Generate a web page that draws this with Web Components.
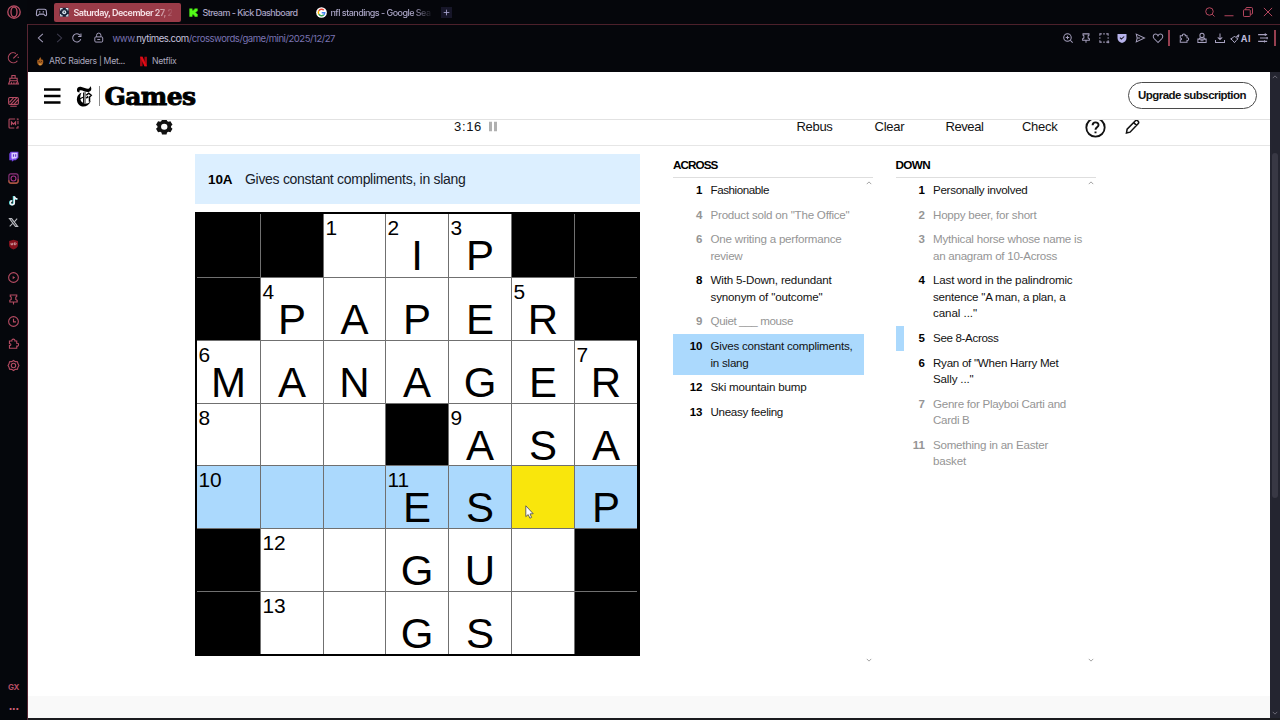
<!DOCTYPE html>
<html lang="en">
<head>
<meta charset="UTF-8">
<title>The Mini Crossword</title>
<style>
    body {
        margin: 0;
        width: 1280px;
        height: 720px;
        overflow: hidden;
        background: #05060b;
        font-family: 'Liberation Sans', Arial, sans-serif;
    }
</style>
</head>
<body>
<mini-app></mini-app>

<script>
const ICONS = {
    opera: '<circle cx="8" cy="8" r="6.2"/><ellipse cx="8" cy="8" rx="3" ry="5"/>',
    gamepad: '<path d="M4.2 4h7.6c1.3 0 2 .8 2.1 2l.4 4.2c.1 2-1.7 2.3-2.5.9L10.7 10H5.3l-1.1 1.1c-.8 1.4-2.6 1.1-2.5-.9L2.1 6c.1-1.2.8-2 2.1-2z"/><path d="M5 7.2h1.6M9.5 7.2h1.6"/>',
    speed: '<path d="M12.8 12A6.2 6.2 0 1 1 11 3M7.8 9l5.4-5.2M13.8 7v1.5"/>',
    clean: '<path d="M6 6.5V3h4v3.5M3.5 6.5h9v3h-9zM3.5 9.5L2 13.5h12l-1.500-4M5.500 13.500v-2M8.500 13.500v-2M11.500 13.500v-2"/>',
    limiter: '<rect x="2" y="3" width="12" height="8.500" rx="1.500"/><path d="M3 9l5-5.500M5 11l7-7.500M9 11l4.500-5M4 13.800h8"/>',
    mods: '<path d="M10 2.500H3.500a1 1 0 0 0-1 1v9a1 1 0 0 0 1 1H9M13.500 5v4M13.500 11v2.500H11M12 2.500h1.500V4"/><path d="M5.500 10.300V6.200L8 8.800l2.500-2.600v4.100" stroke-width="1.500"/>',
    twitch: '<path d="M4.500 2H14v7.500L10.800 12.500H8.500L6 14.500v-2H2.800V4.500z" fill="#7443e6" stroke="none"/><path d="M5.500 3.300h7.300v5.400l-2 1.900H8.300L6.600 12v-1.500H5.500z" fill="#dccdff" stroke="none"/><path d="M8 5.300v3M10.700 5.300v3" stroke="#6033ca" stroke-width="1.400"/>',
    instagram: '<rect x="2.300" y="2.300" width="11.400" height="11.400" rx="2.500" stroke="#8f347e"/><path d="M2.300 10v1.500a2.200 2.200 0 0 0 2.200 2.200h7a2.200 2.200 0 0 0 2.200-2.200V9" stroke="#b8622f"/><circle cx="8" cy="8" r="3" stroke="#a9338b"/><path d="M11.400 4.500h.1" stroke="#a850c8"/>',
    tiktok: '<path d="M8.200 2.500v8.300a2.300 2.300 0 1 1-2.300-2.300M8.200 3c.5 2 2 3.200 4.300 3.300" stroke="#36d5d4" stroke-width="2.200"/><path d="M9 2.800v8a2.400 2.400 0 1 1-2.400-2.400M9 3c.5 2 1.900 3 3.900 3.200" stroke="#f4eef4" stroke-width="1.900"/>',
    x: '<path d="M3 3.200h2.700l7.400 9.600h-2.700z" stroke="#b9bac0"/><path d="M12.500 3.200L9 7.200M7 9l-3.700 3.900" stroke="#b9bac0" stroke-width="1.300"/>',
    ublock: '<path d="M8 2l5.500 1.700v4.500c0 3-2.500 4.800-5.500 6-3-1.200-5.500-3-5.500-6V3.700z" fill="#86111d" stroke="none"/><path d="M5 6v2.300h2V6M9 6v2.300h1.500l.7-.7v-.9l-.7-.7z" stroke="#e4c9cc" stroke-width=".9"/>',
    player: '<circle cx="8" cy="8" r="6"/><path d="M7 6l3 2-3 2z" fill="currentColor" stroke="none"/>',
    pin: '<path d="M4 2.500h8v1.700L10.800 5v3L12.500 9v2h-9V9l1.700-1V5L4 4.200zM8 11v3.300"/>',
    clock: '<circle cx="8" cy="8" r="6"/><path d="M8 4.500V8.500h3"/>',
    puzzle: '<path d="M3 5h3c-.8-3.200 4.400-3.200 3.700 0H12v2.700c3-.8 3 4.200 0 3.500v2.600H3v-3.300c2.300.3 2.300-2.600 0-2.400z"/>',
    settings: '<path d="M8 1.800l2.200 1.400 2.700.2.600 2.500L14.700 8l-1.200 2.100-.6 2.500-2.700.2L8 14.200l-2.200-1.400-2.700-.2-.6-2.500L1.300 8l1.200-2.100.6-2.500 2.700-.2z"/><circle cx="8" cy="8" r="2.700"/>',
    site: '<rect x="1" y="1" width="14" height="14" rx="2" fill="#172338" stroke="none"/><path d="M2.500 5.500V2.500h3M10.500 2.500h3v3M13.500 10.500v3h-3M5.500 13.500h-3v-3" stroke="#dae6ef" stroke-width="1.600"/><circle cx="8" cy="8" r="3" fill="#dae6ef" stroke="none"/><path d="M8 6.800v2.400" stroke="#172338" stroke-width="1.500"/>',
    kick: '<path d="M2 2h4.500v3H8V3.500h1.500V2H14v4.300h-1.500v1.500H11v.9h1.500v1.500H14V14H9.500v-1.500H8V11H6.500v3H2z" fill="#53fc18" stroke="none"/>',
    google: '<circle cx="8" cy="8" r="7.800" fill="#fff" stroke="none"/><g stroke-width="2.100"><path d="M11.300 4.500A4.700 4.700 0 0 0 4 5.700" stroke="#ea4335"/><path d="M4 5.700a4.700 4.700 0 0 0 0 4.700" stroke="#fbbc05"/><path d="M4 10.400a4.700 4.700 0 0 0 7.200 1.100" stroke="#34a853"/><path d="M11.200 11.500A4.700 4.700 0 0 0 12.700 8.300H8.300" stroke="#4285f4"/></g>',
    plus: '<path d="M8 3v10M3 8h10" stroke-width="1.500"/>',
    back: '<path d="M10.500 2.500L4.500 8l6 5.500"/>',
    forward: '<path d="M5.500 2.500l6 5.500-6 5.500"/>',
    reload: '<path d="M13 9.500A5.500 5.500 0 1 1 12.200 4.500M13.300 2v4H9.500"/>',
    lock: '<rect x="2.500" y="6.800" width="11" height="7.200" rx="1.500"/><path d="M5 6.800V4.500a3 3 0 0 1 6 0v2.300M6 10.400h4"/>',
    flame: '<path d="M8 1c.5 2.500 2 3 2.300 5L12 5.500c1.500 4 .5 8.500-4 9.500-4.500-1-5.500-5.500-4-9.500l1.500 1C6 4 7.500 3.500 8 1z" fill="#a85f20" stroke="none"/><path d="M6 8l1.200 1.500M10 8L8.800 9.500" stroke="#32190d" stroke-width="1.500"/><path d="M6 12.500h4" stroke="#f7c45b"/>',
    netflix: '<path d="M3 1h3.600v14H3zM9.400 1H13v14H9.400z" fill="#a50913" stroke="none"/><path d="M3 1h3.600L13 15H9.400z" fill="#e50914" stroke="none"/>',
    search: '<circle cx="7.300" cy="7.300" r="5"/><path d="M11 11l3 3"/>',
    minimize: '<path d="M2 13h12"/>',
    restore: '<rect x="2" y="5" width="9" height="9" rx="1"/><path d="M5 5V3.500A1.500 1.500 0 0 1 6.500 2h6A1.500 1.500 0 0 1 14 3.500v6a1.500 1.500 0 0 1-1.500 1.500H11"/>',
    close: '<path d="M2.500 2.500l11 11M13.500 2.500l-11 11"/>',
    zoomin: '<circle cx="7.300" cy="7.300" r="5"/><path d="M11 11l3.200 3.200M7.300 5v4.600M5 7.300h4.600"/>',
    snapshot: '<path d="M2.500 5V2.500H5M7 2.500h2M11 2.500h2.500V5M13.500 7v2M2.500 7v2M2.500 11v2.500H5M7 13.500h2M13.500 11v4M11 13.500h4"/>',
    shield: '<path d="M2 2.500h12V8c0 3.500-2.500 5.500-6 6.500-3.500-1-6-3-6-6.500z" fill="#b7b3ec" stroke="none"/><path d="M5.200 7.500l2 2 3.700-3.500" stroke="#15131f"/>',
    send: '<path d="M3 2.800L14 8 3 13.200 4.200 8zM4.200 8H8"/>',
    heart: '<path d="M8 14L2.700 8.700C.5 6 2 2.800 4.700 2.800 6.500 2.800 7.500 4 8 5c.5-1 1.500-2.200 3.300-2.200C14 2.800 15.500 6 13.300 8.700z"/>',
    profile: '<circle cx="8" cy="4.500" r="2.800"/><path d="M5.500 7.500L4 9.500h8l-1.500-2M2.500 9.500h11V14h-11zM6 11.800h4"/>',
    download: '<path d="M8 2v8M5 7.200L8 10.200l3-3M2 10.500V14h12v-3.500"/>',
    aria: '<path d="M6.500 4.500L9 7l2.500 1.500L9 11l-2.500 3L4 11 1 8.500 4 7zM9.500 5L13 2.500 12 6zM13 7v.1"/>',
    easy: '<path d="M1.500 3.500h12M4 8h10.500M1.500 12.500h12M11 1.800v3.400M13.500 6.500v3M10 11v3"/>',
    burger: '<path d="M0 1.500h16M0 8h16M0 14.500h16" stroke-width="2.300"/>',
    gear: '<path fill-rule="evenodd" stroke="none" fill="currentColor" d="M5.800 0h4.400l.5 2 1.300.8 2-.6L16 5.900 14.600 7.300v1.400L16 10.100 14 13.800l-2-.6-1.300.8-.5 2H5.800l-.5-2L4 13.200l-2 .6-2-3.700 1.400-1.400V7.300L0 5.900 2 2.200l2 .6L5.300 2zM8 4.900a3.100 3.100 0 1 0 0 6.200 3.100 3.100 0 0 0 0-6.200z"/>',
    pause: '<path d="M4 1v14M12 1v14" stroke-width="4.800"/>',
    help: '<circle cx="8" cy="8" r="7" stroke-width="1.400"/><path d="M5.800 6.300c0-2.900 4.500-2.900 4.500-.2C10.300 7.800 8 7.900 8 9.700M8 11.100v1.300" stroke-width="1.500"/>',
    pencil: '<path d="M1.500 14.500l.7-4L10.500 2c1-1 2-.7 2.800 0 .8.800 1.300 1.800.2 2.900L5.200 13.600zM9 3.700L12 6.700" stroke-width="1.600"/>',
    up: '<path d="M2 11l6-6 6 6"/>',
    down: '<path d="M2 5l6 6 6-6"/>',
    nyt: '<g fill="currentColor" stroke="none"><path d="M1 4.500C.5 1.500 3 .3 5.500 1c2.500.7 5 1.800 7 1.500C13.800 2.300 14 1.500 14 .3c2 1.200 2 4.900-1.500 5.300C9.500 6 7 4.200 4.800 4 3.300 3.900 3 4.800 3.800 6 2.500 6.200 1.200 5.800 1 4.500z"/><path d="M5.500 6.500C.5 8-.3 14 2.500 17.300c3 3.500 9.500 3.300 12.500-3.300-2 2.300-4.500 3.200-7 2.500C4 15.300 3.200 10.500 5.500 6.500z"/></g><path d="M7.500 6.200v10M9 5.800v10.500" stroke-width=".9"/><path d="M1.500 13.300L7 10.800" stroke-width="1.100"/><path d="M10.200 8.800L12.700 6.800l2.500 2-1.700 1.700v4.500M10.200 11.500l2-1.500" stroke-width="1.500"/>'
};

class UiIcon extends HTMLElement {
    connectedCallback() {
        const size = this.getAttribute('size') || 12;
        const height = this.getAttribute('h') || size;
        const box = this.getAttribute('box') || '0 0 16 16';
        this.attachShadow({ mode: 'open' }).innerHTML = `
            <style>
                :host { display: inline-flex; flex: none; align-items: center; justify-content: center; }
                svg { display: block; fill: none; stroke: currentColor; stroke-width: var(--stroke, 1.35); overflow: visible; }
            </style>
            <svg width="${size}" height="${height}" viewBox="${box}" preserveAspectRatio="none">${ICONS[this.getAttribute('name')]}</svg>
        `;
    }
}

// One line of text, tracked so that it takes the width in its w attribute
class FitText extends HTMLElement {
    connectedCallback() {
        this.attachShadow({ mode: 'open' }).innerHTML = `
            <style>
                :host { display: inline-block; flex: none; white-space: nowrap; }
            </style>
            <slot></slot>
        `;
        const width = Number(this.getAttribute('w'));
        const natural = this.getBoundingClientRect().width;
        const count = this.textContent.length;
        this.style.letterSpacing = `${((width - natural) / count).toFixed(3)}px`;
    }
}

class GxSidebar extends HTMLElement {
    connectedCallback() {
        const group = (names) => `<div>${names.map((name) => `<ui-icon name="${name}" size="13"></ui-icon>`).join('')}</div>`;
        this.attachShadow({ mode: 'open' }).innerHTML = `
            <style>
                :host { display: flex; flex-direction: column; align-items: center; width: 27px; height: 720px; flex: none; color: #b64c63; background: #05070c; }
                div { display: flex; flex-direction: column; align-items: center; }
                div ui-icon { height: 22px; }
                .logo { height: 24px; margin-bottom: 22px; }
                div + div { margin-top: 11px; }
                .bottom { margin-top: auto; font: bold 8px Inter, sans-serif; line-height: 22px; }
                .more { font-size: 12px; line-height: 15px; padding-bottom: 7px; color: #d0607a; }
            </style>
            <ui-icon class="logo" name="opera" size="16"></ui-icon>
            ${group(['speed', 'clean', 'limiter', 'mods'])}
            ${group(['twitch', 'instagram', 'tiktok', 'x', 'ublock'])}
            ${group(['player', 'pin', 'clock', 'puzzle', 'settings'])}
            <div class="bottom"><fit-text w="11">GX</fit-text><fit-text class="more" w="10">...</fit-text></div>
        `;
    }
}

class GxTabs extends HTMLElement {
    connectedCallback() {
        this.attachShadow({ mode: 'open' }).innerHTML = `
            <style>
                :host { display: flex; align-items: center; height: 24px; box-sizing: border-box; padding-left: 8px; color: #a9a4c4; font: 500 9px Inter, sans-serif; }
                .tab { display: flex; align-items: center; height: 19px; box-sizing: border-box; margin-top: 1px; }
                .active { width: 127px; margin-left: 5.500px; padding-left: 5.500px; gap: 4px; border-radius: 2px; background: #9a3b48; color: #f6e3e8; font-weight: 600; }
                .kick { width: 127px; padding-left: 7.500px; gap: 3.500px; }
                .google { width: 127px; padding-left: 8px; gap: 4px; }
                .tab fit-text { margin-top: -1px; }
                .active fit-text, .google fit-text { -webkit-mask-image: linear-gradient(90deg, #000 82%, transparent 102%); }
                .new { width: 11px; height: 11px; margin-left: 6px; background: #171629; color: #aaa5cf; }
                .window { display: flex; gap: 7.300px; margin-left: auto; margin-right: 6.500px; color: #c64d65; --stroke: 1.2; }
            </style>
            <ui-icon name="gamepad" size="13"></ui-icon>
            <div class="tab active"><ui-icon name="site" size="10.500"></ui-icon><fit-text w="99">Saturday, December 27, 2</fit-text></div>
            <div class="tab kick"><ui-icon name="kick" size="11"></ui-icon><fit-text w="95">Stream - Kick Dashboard</fit-text></div>
            <div class="tab google"><ui-icon name="google" size="11"></ui-icon><fit-text w="100">nfl standings - Google Sea</fit-text></div>
            <ui-icon class="new" name="plus" size="9"></ui-icon>
            <div class="window">
                <ui-icon name="search"></ui-icon>
                <ui-icon name="minimize"></ui-icon>
                <ui-icon name="restore"></ui-icon>
                <ui-icon name="close"></ui-icon>
            </div>
        `;
    }
}

class GxAddress extends HTMLElement {
    connectedCallback() {
        this.attachShadow({ mode: 'open' }).innerHTML = `
            <style>
                :host { display: block; height: 48px; box-sizing: border-box; border-top: 1px solid #4c202b; font-family: Inter, sans-serif; color: #a6a0be; background: #05060b; }
                .row { display: flex; align-items: center; height: 26px; padding-left: 7px; }
                .row > ui-icon { margin-right: 6px; }
                .off { color: #3f3d50; }
                .url { margin-left: 2px; font-size: 9.600px; color: #7a73b2; }
                .url b { font-weight: 400; color: #c6c1dc; }
                .tools { display: flex; align-items: center; margin-left: auto; }
                .tools ui-icon { width: 18px; }
                .bar { width: 2px; height: 16px; background: #963f50; margin: 0 4.500px 0 1.500px; }
                .bar:last-child { margin: 0 4.500px 0 1.700px; }
                .ai { display: flex; align-items: center; width: 24px; margin-right: 1px; color: #bdb8d8; font-size: 9px; font-weight: 700; }
                .ai ui-icon { width: 11px; margin-left: 1px; }
                .marks { display: flex; align-items: center; height: 18px; padding: 1px 0 0 7px; font-size: 8.700px; color: #aaa6bd; }
                .marks ui-icon { margin-right: 3.500px; }
                .netflix { margin-left: 12.500px; }
            </style>
            <div class="row">
                <ui-icon name="back"></ui-icon>
                <ui-icon class="off" name="forward"></ui-icon>
                <ui-icon name="reload"></ui-icon>
                <ui-icon name="lock" size="11.500" style="margin-left:4px"></ui-icon>
                <fit-text class="url" w="222.500">www.<b>nytimes.com</b>/crosswords/game/mini/2025/12/27</fit-text>
                <div class="tools">
                    ${['zoomin', 'pin', 'snapshot', 'shield', 'send', 'heart'].map((name) => `<ui-icon name="${name}" size="12"></ui-icon>`).join('')}
                    <span class="bar"></span>
                    ${['puzzle', 'profile', 'download'].map((name) => `<ui-icon name="${name}" size="12"></ui-icon>`).join('')}
                    <span class="ai"><ui-icon name="aria" size="11"></ui-icon><fit-text w="10">AI</fit-text></span>
                    <ui-icon name="easy" size="12"></ui-icon>
                    <span class="bar"></span>
                </div>
            </div>
            <div class="marks">
                <ui-icon name="flame" size="10.500"></ui-icon><fit-text w="76">ARC Raiders | Met...</fit-text>
                <ui-icon class="netflix" name="netflix" size="11"></ui-icon><fit-text w="24.500">Netflix</fit-text>
            </div>
        `;
    }
}

class GamesHeader extends HTMLElement {
    connectedCallback() {
        this.attachShadow({ mode: 'open' }).innerHTML = `
            <style>
                :host { display: flex; align-items: center; flex: none; height: 48px; box-sizing: border-box; padding: 0 13.500px 0 15.500px; border-bottom: 1px solid #e2e2e2; color: #000; }
                .nyt { margin-left: 16px; padding-top: 2px; }
                .rule { width: 1px; height: 20px; margin: 0 5px 0 6.500px; background: #8a8a8a; }
                .games { font: bold 25px/46px 'DejaVu Serif', serif; padding-top: 2px; -webkit-text-stroke: .9px #000; }
                button { margin-left: auto; width: 129px; height: 27px; padding: 0; border: 1px solid #4a4a4a; border-radius: 14px; background: #fff; color: #121212; font: bold 11.500px/23px 'Liberation Sans', sans-serif; }
            </style>
            <ui-icon name="burger" size="16.500" h="16"></ui-icon>
            <ui-icon class="nyt" name="nyt" size="16" h="21" box="0 0 16 20"></ui-icon>
            <span class="rule"></span>
            <fit-text class="games" w="91">Games</fit-text>
            <button><fit-text w="108">Upgrade subscription</fit-text></button>
        `;
    }
}

class GamesToolbar extends HTMLElement {
    connectedCallback() {
        this.attachShadow({ mode: 'open' }).innerHTML = `
            <style>
                :host { display: flex; align-items: center; flex: none; height: 26px; box-sizing: border-box; padding: 0 129.500px 0 128px; overflow: hidden; border-bottom: 1px solid #e6e6e6; color: #121212; font-size: 13px; line-height: 14px; }
                ui-icon { margin-top: -11.500px; height: 14px; }
                fit-text { margin-top: -11px; }
                .time { margin-left: 281.500px; }
                .pause { margin-left: 6px; color: #b0b0b0; margin-top: -12px; }
                .actions { display: flex; margin-left: auto; }
                .actions fit-text { margin-right: 42px; }
                .actions fit-text:nth-child(2) { margin-right: 41px; }
                .actions fit-text:nth-child(3) { margin-right: 38.500px; }
                .actions fit-text:nth-child(4) { margin-right: 27.500px; }
                .actions ui-icon { margin-top: -11px; }
                .actions ui-icon + ui-icon { margin: -11px 0 0 19px; }
            </style>
            <ui-icon name="gear" size="16.500" h="15.500"></ui-icon>
            <fit-text class="time" w="28">3:16</fit-text>
            <ui-icon class="pause" name="pause" size="10" h="11"></ui-icon>
            <div class="actions">
                <fit-text w="36">Rebus</fit-text>
                <fit-text w="30">Clear</fit-text>
                <fit-text w="38">Reveal</fit-text>
                <fit-text w="35.500">Check</fit-text>
                <ui-icon name="help" size="21"></ui-icon>
                <ui-icon name="pencil" size="15.500"></ui-icon>
            </div>
        `;
    }
}

class ClueBar extends HTMLElement {
    connectedCallback() {
        this.attachShadow({ mode: 'open' }).innerHTML = `
            <style>
                :host { display: flex; align-items: center; height: 50px; padding-left: 13px; gap: 12.500px; box-sizing: border-box; background: #dcefff; color: #16202a; font-size: 14px; }
                b { color: #000; font-weight: bold; font-size: 13.500px; }
            </style>
            <b><fit-text w="24.500">10A</fit-text></b>
            <fit-text w="220.500">Gives constant compliments, in slang</fit-text>
        `;
    }
}

class BoardCell extends HTMLElement {
    connectedCallback() {
        const number = this.getAttribute('number');
        const letter = this.getAttribute('letter');
        this.attachShadow({ mode: 'open' }).innerHTML = `
            <style>
                :host { display: grid; background: #fff; color: #000; }
                :host([kind="block"]) { background: #000; }
                :host([kind="word"]) { background: #abd9fd; }
                :host([kind="cursor"]) { background: #f9e60c; }
                span { grid-area: 1 / 1; }
                .number { padding-left: 1.500px; font-size: 20.900px; line-height: 28.500px; }
                .letter { padding-top: 23.300px; font-size: 42px; line-height: 38px; text-align: center; }
            </style>
            ${number ? `<span class="number">${number}</span>` : ''}
            ${letter ? `<span class="letter">${letter}</span>` : ''}
        `;
    }
}

class MiniBoard extends HTMLElement {
    connectedCallback() {
        // # is a block, . is an empty square
        const rows = ['##.IP##', '#PAPER#', 'MANAGER', '...#ASA', '...ES.P', '#..GU.#', '#..GS.#'];
        const numbers = { '0,2': 1, '0,3': 2, '0,4': 3, '1,1': 4, '1,5': 5, '2,0': 6, '2,6': 7, '3,0': 8, '3,4': 9, '4,0': 10, '4,3': 11, '5,1': 12, '6,1': 13 };
        const cells = rows.map((row, y) => [...row].map((char, x) => {
            const kind = char === '#' ? 'block' : y === 4 ? (x === 5 ? 'cursor' : 'word') : 'open';
            const letter = /[A-Z]/.test(char) ? char : '';
            return `<board-cell kind="${kind}" letter="${letter}" number="${numbers[`${y},${x}`] || ''}"></board-cell>`;
        }).join('')).join('');

        this.attachShadow({ mode: 'open' }).innerHTML = `
            <style>
                :host {
                    display: grid;
                    grid-template-columns: 63px 62px 61px 62px 62px 62px 62px;
                    grid-template-rows: 63px 62px 62px 61px 62px 62px 62px;
                    gap: 1px;
                    width: 440px;
                    margin-top: 8px;
                    border: 2px solid #000;
                    border-right-width: 3px;
                    background: #707070;
                }
            </style>
            ${cells}
        `;
    }
}

class ClueList extends HTMLElement {
    set clues(clues) {
        this._clues = clues;
        this.render();
    }

    render() {
        const items = this._clues.map(([number, state, ...lines]) => `
            <li class="${state}">
                <b>${number}</b>
                <div>${lines.map(([text, width]) => `<fit-text w="${width}">${text}</fit-text>`).join('')}</div>
            </li>
        `).join('');

        this.attachShadow({ mode: 'open' }).innerHTML = `
            <style>
                :host { display: block; width: 200px; font-size: 11.600px; line-height: 16.450px; color: #121212; }
                h2 { margin: 0; height: 24px; padding-top: 1.500px; box-sizing: border-box; border-bottom: 1px solid #dedede; color: #000; font-size: 11.700px; line-height: 18px; }
                .scroll { display: flex; justify-content: space-between; height: 486px; }
                ul { margin: 0; padding: 0; list-style: none; width: 191px; }
                li { display: flex; box-sizing: border-box; padding: 4px 0 4.200px; border-left: 8px solid transparent; }
                b { width: 21.500px; margin-right: 8px; text-align: right; color: #000; font-size: 11.500px; }
                li > div { display: flex; flex-direction: column; align-items: flex-start; }
                .done, .done b { color: #959595; }
                .selected { background: #abd9fd; border-color: #abd9fd; }
                .related { border-color: #abd9fd; }
                .arrows { display: flex; flex-direction: column; justify-content: space-between; width: 9px; padding: 2px 0 1px; color: #999; --stroke: 2.4; }
            </style>
            <h2><fit-text w="${this.getAttribute('heading-width')}">${this.getAttribute('heading')}</fit-text></h2>
            <div class="scroll">
                <ul>${items}</ul>
                <div class="arrows"><ui-icon name="up" size="6"></ui-icon><ui-icon name="down" size="6"></ui-icon></div>
            </div>
        `;
    }
}

class PageScrollbar extends HTMLElement {
    connectedCallback() {
        this.attachShadow({ mode: 'open' }).innerHTML = `
            <style>
                :host { display: flex; flex-direction: column; align-items: center; width: 10px; flex: none; background: #242530; color: #777581; --stroke: 2.2; }
                ui-icon { height: 10px; }
                .thumb { width: 6px; height: 345px; margin-top: 71px; border-radius: 3px; background: #383844; }
                ui-icon:last-child { margin-top: auto; }
            </style>
            <ui-icon name="up" size="6"></ui-icon>
            <div class="thumb"></div>
            <ui-icon name="down" size="6"></ui-icon>
        `;
    }
}

class MiniApp extends HTMLElement {
    connectedCallback() {
        this.attachShadow({ mode: 'open' }).innerHTML = `
            <style>
                :host { display: flex; width: 1280px; height: 720px; }
                .window { display: flex; flex-direction: column; flex: 1; }
                .frame { flex: 1; display: flex; flex-direction: column; border-left: 1px solid #582633; }
                .view { display: flex; flex: 1; }
                .page { display: flex; flex-direction: column; flex: 1; background: #fff; }
                main { display: flex; flex: 1; padding: 8px 0 0 167px; }
                .board { width: 445px; margin-right: 33px; }
                clue-list + clue-list { margin-left: 22.500px; }
                footer { height: 22px; background: #f9f9f9; }
                .edge { height: 2px; background: #1b1c20; }
                .pointer { position: absolute; left: 525px; top: 504.500px; }
            </style>
            <gx-sidebar></gx-sidebar>
            <div class="window">
                <gx-tabs></gx-tabs>
                <div class="frame">
                    <gx-address></gx-address>
                    <div class="view">
                        <div class="page">
                            <games-header></games-header>
                            <games-toolbar></games-toolbar>
                            <main>
                                <div class="board"><clue-bar></clue-bar><mini-board></mini-board></div>
                                <clue-list class="across" heading="ACROSS" heading-width="44.500"></clue-list>
                                <clue-list class="down" heading="DOWN" heading-width="34.500"></clue-list>
                            </main>
                            <footer></footer>
                        </div>
                        <page-scrollbar></page-scrollbar>
                    </div>
                    <div class="edge"></div>
                </div>
            </div>
            <svg class="pointer" width="9" height="14" viewBox="0 0 9 14"><path d="M.8.8v10.800l2.400-2 1.700 3.600 1.700-.8L5 8.900l3.200-.2z" fill="#fff" stroke="#555" stroke-width=".9"/></svg>
        `;

        this.shadowRoot.querySelector('.across').clues = [
            [1, '', ['Fashionable', 58.5]],
            [4, 'done', ['Product sold on "The Office"', 139]],
            [6, 'done', ['One writing a performance', 131], ['review', 32]],
            [8, '', ['With 5-Down, redundant', 121], ['synonym of "outcome"', 112]],
            [9, 'done', ['Quiet ___ mouse', 82.5]],
            [10, 'selected', ['Gives constant compliments,', 142], ['in slang', 38]],
            [12, '', ['Ski mountain bump', 96]],
            [13, '', ['Uneasy feeling', 72.5]]
        ];
        this.shadowRoot.querySelector('.down').clues = [
            [1, '', ['Personally involved', 94.5]],
            [2, 'done', ['Hoppy beer, for short', 103.5]],
            [3, 'done', ['Mythical horse whose name is', 149], ['an anagram of 10-Across', 124]],
            [4, '', ['Last word in the palindromic', 139.5], ['sentence "A man, a plan, a', 132.5], ['canal ..."', 44]],
            [5, 'related', ['See 8-Across', 65.5]],
            [6, '', ['Ryan of "When Harry Met', 125.5], ['Sally ..."', 40.5]],
            [7, 'done', ['Genre for Playboi Carti and', 133], ['Cardi B', 36.5]],
            [11, 'done', ['Something in an Easter', 115], ['basket', 33]]
        ];
    }
}

customElements.define('ui-icon', UiIcon);
customElements.define('fit-text', FitText);
customElements.define('gx-sidebar', GxSidebar);
customElements.define('gx-tabs', GxTabs);
customElements.define('gx-address', GxAddress);
customElements.define('games-header', GamesHeader);
customElements.define('games-toolbar', GamesToolbar);
customElements.define('clue-bar', ClueBar);
customElements.define('board-cell', BoardCell);
customElements.define('mini-board', MiniBoard);
customElements.define('clue-list', ClueList);
customElements.define('page-scrollbar', PageScrollbar);
customElements.define('mini-app', MiniApp);
</script>
</body>
</html>
